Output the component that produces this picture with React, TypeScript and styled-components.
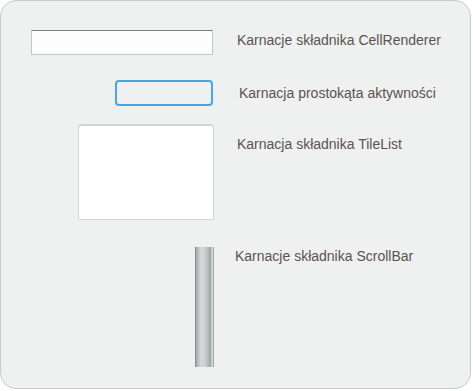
import React from "react";
import styled, { createGlobalStyle } from "styled-components";

const Global = createGlobalStyle`
  html, body { margin: 0; padding: 0; background: #ffffff; }
  body { font-family: "Liberation Sans", Arial, sans-serif; }
`;

const Panel = styled.div`
  box-sizing: border-box;
  width: 471px;
  height: 389px;
  border: 1px solid #cacaca;
  border-radius: 16px;
  background: #eff0f0;
  padding-top: 28px;
  display: grid;
  grid-template-columns: 213px 1fr;
  column-gap: 23px;
  align-content: start;
`;

const Cell = styled.div<{ $top?: number; $right?: number }>`
  display: flex;
  justify-content: flex-end;
  margin-top: ${(p) => p.$top ?? 0}px;
  padding-right: ${(p) => p.$right ?? 0}px;
`;

const Label = styled.div<{ $top?: number; $shift?: number }>`
  margin-top: ${(p) => p.$top ?? 0}px;
  margin-left: ${(p) => p.$shift ?? 0}px;
  font-size: 14px;
  line-height: 16px;
  color: #5b5353;
  white-space: nowrap;
`;

const TextField = styled.div`
  box-sizing: border-box;
  width: 182px;
  height: 25px;
  background: #fdfdfd;
  border: 1px solid #c3c7c7;
  border-top-color: #7e7e7e;
`;

const FocusRect = styled.div`
  box-sizing: border-box;
  width: 98px;
  height: 26px;
  border: 2px solid #4aa5e2;
  border-radius: 4px;
  background: #eff0f0;
`;

const Tile = styled.div`
  box-sizing: border-box;
  width: 136px;
  height: 96px;
  background: #ffffff;
  border: 1px solid #d3d3d3;
  border-top-width: 2px;
  border-radius: 4px 4px 1px 1px;
`;

const ScrollBar = styled.div`
  box-sizing: border-box;
  width: 19px;
  height: 120px;
  background: linear-gradient(
    to right,
    #7b8081 0%,
    #a9aeaf 8%,
    #d6d9d9 32%,
    #c9cdcd 55%,
    #a0a5a5 82%,
    #e4e6e6 90%,
    #8d9292 100%
  );
`;

export default function App() {
  return (
    <>
      <Global />
      <Panel>
        <Cell $top={1} $right={1}>
          <TextField />
        </Cell>
        <Label $top={3} $shift={0}>Karnacje składnika CellRenderer</Label>

        <Cell $top={25} $right={1}>
          <FocusRect />
        </Cell>
        <Label $top={30} $shift={2}>Karnacja prostokąta aktywności</Label>

        <Cell $top={18}>
          <Tile />
        </Cell>
        <Label $top={30} $shift={0}>Karnacja składnika TileList</Label>

        <Cell $top={27}>
          <ScrollBar />
        </Cell>
        <Label $top={28} $shift={-2}>Karnacje składnika ScrollBar</Label>
      </Panel>
    </>
  );
}
